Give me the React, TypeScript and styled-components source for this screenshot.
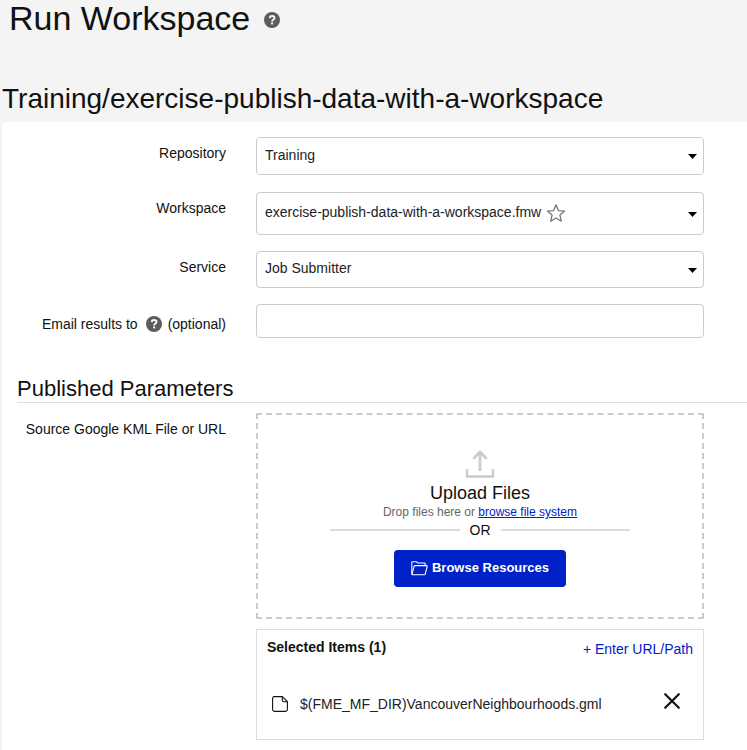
import React from "react";
import styled, { createGlobalStyle } from "styled-components";

const GlobalStyle = createGlobalStyle`
  *, *::before, *::after { box-sizing: border-box; }
  body {
    margin: 0;
    background: #f4f4f4;
    color: #111;
    font-family: "Liberation Sans", Arial, sans-serif;
    font-size: 14px;
    line-height: 20px;
  }
  h1, h2, h3, h4, p { margin: 0; font-weight: 400; }
  svg { display: block; flex: none; }
`;

const Page = styled.div`
  display: flex;
  flex-direction: column;
  min-height: 100vh;
`;

const Header = styled.header`
  display: flex;
  align-items: center;
  gap: 14px;
  padding: 0 9px;
  height: 40px;
`;

const PageTitle = styled.h1`
  padding-bottom: 4px;
  font-size: 34px;
  line-height: 36px;
`;

const WorkspaceTitle = styled.h2`
  padding: 43px 2px 7px;
  font-size: 28px;
  line-height: 32px;
`;

const Panel = styled.main`
  flex: 1;
  margin-left: 2px;
  padding: 15px 0 9px 15px;
  background: #fff;
  border-top-left-radius: 4px;
`;

const FieldRow = styled.div<{ $gap?: number }>`
  display: grid;
  grid-template-columns: 209px minmax(0, 1fr);
  column-gap: 30px;
  align-items: start;
  padding-right: 43px;
  margin-bottom: ${(p) => p.$gap ?? 16}px;
`;

const Label = styled.label<{ $top?: number }>`
  display: flex;
  justify-content: flex-end;
  align-items: center;
  padding-top: ${(p) => p.$top ?? 6}px;
  white-space: pre;
`;

const HelpButton = styled.button`
  display: inline-flex;
  padding: 0;
  border: 0;
  background: none;
  cursor: pointer;
`;

const LabelHelp = styled(HelpButton)`
  margin: 0 6px 0 8px;
`;

const SelectBox = styled.div`
  position: relative;
  display: grid;
`;

const Select = styled.select<{ $height: number }>`
  appearance: none;
  width: 100%;
  height: ${(p) => p.$height}px;
  padding: 0 30px 3px 8px;
  border: 1px solid #ccc;
  border-radius: 4px;
  background: #fff;
  color: #222;
  font: inherit;
`;

const Caret = styled.svg`
  position: absolute;
  right: 7px;
  top: 50%;
  margin-top: -2px;
  pointer-events: none;
`;

const StarButton = styled.button`
  position: absolute;
  left: 290px;
  top: 11px;
  padding: 0;
  border: 0;
  background: none;
  cursor: pointer;
`;

const TextInput = styled.input`
  width: 100%;
  height: 34px;
  padding: 0 8px;
  border: 1px solid #ccc;
  border-radius: 4px;
  background: #fff;
  font: inherit;
`;

const SectionTitle = styled.h3`
  margin-bottom: 10px;
  border-bottom: 1px solid #ddd;
  font-size: 22px;
  line-height: 26px;
`;

const FileField = styled.div`
  display: flex;
  flex-direction: column;
  gap: 10px;
`;

const DropZone = styled.div`
  display: flex;
  flex-direction: column;
  align-items: center;
  padding: 34px 20px 30px;
  border: 2px dashed #ccc;
`;

const DropTitle = styled.h4`
  padding-top: 2px;
  font-size: 18px;
  line-height: 24px;
`;

const DropHint = styled.p`
  color: #666;
  font-size: 12px;
  line-height: 15px;
`;

const Link = styled.a`
  color: #0021c8;
  text-decoration: underline;
`;

const Divider = styled.div`
  display: flex;
  align-items: center;
  gap: 10px;
  width: 300px;
  max-width: 100%;
  &::before, &::after {
    content: "";
    flex: 1;
    height: 2px;
    background: #ddd;
  }
`;

const PrimaryButton = styled.button`
  display: flex;
  align-items: center;
  gap: 4px;
  margin-top: 10px;
  height: 37px;
  padding: 0 17px 1px;
  border: 0;
  border-radius: 4px;
  background: #0021c8;
  color: #fff;
  font: inherit;
  font-size: 13px;
  font-weight: 700;
  cursor: pointer;
`;

const SelectedBox = styled.section`
  padding: 7px 10px 23px;
  border: 1px solid #ddd;
`;

const SelectedHeader = styled.div`
  display: flex;
  justify-content: space-between;
`;

const SelectedTitle = styled.h4`
  && { font-weight: 700; }
  font-size: 14px;
`;

const UrlButton = styled.button`
  padding: 2px 0 0;
  border: 0;
  background: none;
  color: #0021c8;
  font: inherit;
  cursor: pointer;
`;

const FileItem = styled.div`
  display: flex;
  align-items: center;
  gap: 12px;
  padding: 33px 12px 0 5px;
  color: #222;
`;

const FileName = styled.span`
  flex: 1;
  min-width: 0;
`;

const RemoveButton = styled.button`
  padding: 0 0 6px;
  border: 0;
  background: none;
  cursor: pointer;
`;

const HelpIcon = () => (
  <svg width="16" height="16" viewBox="0 0 16 16" aria-hidden="true">
    <circle cx="8" cy="8" r="8" fill="#5c5c5c" />
    <path d="M5.7 6.1C5.8 4.7 6.800 4 8.100 4C9.500 4 10.500 4.700 10.500 5.900C10.500 7.400 8.100 7.500 8.100 9.400" fill="none" stroke="#f4f4f4" strokeWidth="1.9" />
    <rect x="7.100" y="10.400" width="2" height="2" fill="#f4f4f4" />
  </svg>
);

const StarIcon = () => (
  <svg width="20" height="20" viewBox="0 0 20 20" fill="none" stroke="#777" strokeWidth="1.3" strokeLinejoin="round" aria-hidden="true">
    <path d="M10 1.8L12.4 7.6L18.600 8.100L13.900 12.100L15.300 18.200L10 15L4.700 18.200L6.100 12.100L1.400 8.100L7.600 7.600Z" />
  </svg>
);

const UploadIcon = () => (
  <svg width="30" height="30" viewBox="0 0 30 30" fill="none" stroke="#ccc" aria-hidden="true">
    <path d="M15 22V3M8.300 9.800L15 3.100L21.700 9.800" strokeWidth="2.8" />
    <path d="M2 20V27.500H28V20" strokeWidth="2.5" strokeLinejoin="round" />
  </svg>
);

const FolderIcon = () => (
  <svg width="17" height="15" viewBox="0 0 17 15" fill="none" stroke="#fff" strokeWidth="1.1" strokeLinejoin="round" aria-hidden="true">
    <path d="M.8 13.200V1.300Q.8 .8 1.300 .8H5.600L6.800 2H13.500Q14.200 2 14.200 2.700V4.600" />
    <path d="M.8 13.700L3.200 5.200Q3.400 4.600 4 4.600H15.700Q16.400 4.600 16.200 5.300L14.200 13.200Q14 13.800 13.400 13.800H1.300Q.8 13.800 .8 13.200" />
  </svg>
);

const FileIcon = () => (
  <svg width="16" height="16" viewBox="0 0 16 16" fill="none" stroke="#111" strokeWidth="1.1" strokeLinejoin="round" aria-hidden="true">
    <path d="M10.300 .6H2.500A1.900 1.900 0 0 0 .6 2.500V13.500A1.900 1.900 0 0 0 2.500 15.400H13.500A1.900 1.900 0 0 0 15.400 13.500V5.700Z" />
    <path d="M10.300 .6V4.300A1.400 1.400 0 0 0 11.700 5.700H15.400" />
  </svg>
);

const CloseIcon = () => (
  <svg width="18" height="18" viewBox="0 0 18 18" stroke="#111" strokeWidth="2.2" strokeLinecap="round" aria-hidden="true">
    <path d="M2.200 2.200L15.800 15.800M15.800 2.200L2.200 15.800" />
  </svg>
);

interface DropdownProps {
  id: string;
  label: string;
  value: string;
  height: number;
  gap?: number;
  children?: React.ReactNode;
}

const Dropdown = ({ id, label, value, height, gap, children }: DropdownProps) => (
  <FieldRow $gap={gap}>
    <Label htmlFor={id}>{label}</Label>
    <SelectBox>
      <Select id={id} $height={height} defaultValue={value}>
        <option>{value}</option>
      </Select>
      {children}
      <Caret width="9" height="5" viewBox="0 0 9 5" aria-hidden="true">
        <path d="M0 0H9L4.500 5Z" />
      </Caret>
    </SelectBox>
  </FieldRow>
);

export default function App() {
  return (
    <Page>
      <GlobalStyle />
      <Header>
        <PageTitle>Run Workspace</PageTitle>
        <HelpButton type="button" aria-label="Help"><HelpIcon /></HelpButton>
      </Header>
      <WorkspaceTitle>Training/exercise-publish-data-with-a-workspace</WorkspaceTitle>
      <Panel>
        <Dropdown id="repository" label="Repository" value="Training" height={38} gap={17} />
        <Dropdown id="workspace" label="Workspace" value="exercise-publish-data-with-a-workspace.fmw" height={43}>
          <StarButton type="button" aria-label="Add to favorites"><StarIcon /></StarButton>
        </Dropdown>
        <Dropdown id="service" label="Service" value="Job Submitter" height={37} />
        <FieldRow $gap={38}>
          <Label htmlFor="email" $top={10}>
            Email results to
            <LabelHelp type="button" aria-label="About email results"><HelpIcon /></LabelHelp>
            (optional)
          </Label>
          <TextInput id="email" type="email" />
        </FieldRow>
        <SectionTitle>Published Parameters</SectionTitle>
        <FieldRow $gap={0}>
          <Label as="span">Source Google KML File or URL</Label>
          <FileField>
            <DropZone>
              <UploadIcon />
              <DropTitle>Upload Files</DropTitle>
              <DropHint>Drop files here or <Link href="#browse">browse file system</Link></DropHint>
              <Divider>OR</Divider>
              <PrimaryButton type="button"><FolderIcon />Browse Resources</PrimaryButton>
            </DropZone>
            <SelectedBox>
              <SelectedHeader>
                <SelectedTitle>Selected Items (1)</SelectedTitle>
                <UrlButton type="button">+ Enter URL/Path</UrlButton>
              </SelectedHeader>
              <FileItem>
                <FileIcon />
                <FileName>$(FME_MF_DIR)VancouverNeighbourhoods.gml</FileName>
                <RemoveButton type="button" aria-label="Remove file"><CloseIcon /></RemoveButton>
              </FileItem>
            </SelectedBox>
          </FileField>
        </FieldRow>
      </Panel>
    </Page>
  );
}
